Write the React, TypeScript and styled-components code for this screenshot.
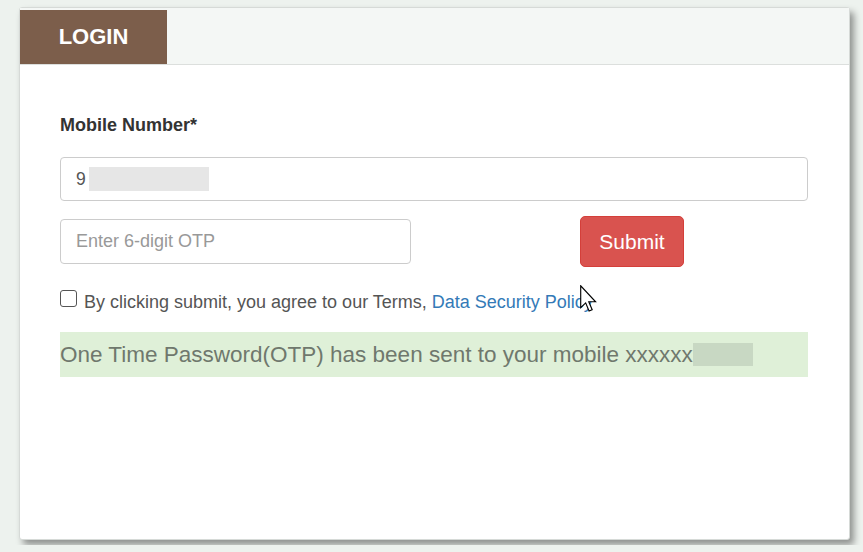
import styled, { createGlobalStyle } from 'styled-components';

const GlobalStyle = createGlobalStyle`
  html, body {
    margin: 0;
    padding: 0;
    background: #edf2ee;
  }

  body {
    font-family: 'Liberation Sans', Arial, sans-serif;
    color: #333;
  }
`;

export default function App() {
  return (
    <>
      <GlobalStyle />
      <Page>
        <Modal>
          <Header>
            <Tab>LOGIN</Tab>
          </Header>
          <Body>
            <Label>Mobile Number*</Label>
            <PhoneField>
              <span>9</span>
              <Redact $w={120} $h={24} $color="#e6e6e6" />
            </PhoneField>
            <OtpRow>
              <OtpInput placeholder="Enter 6-digit OTP" />
              <SubmitButton>Submit</SubmitButton>
            </OtpRow>
            <Terms>
              <Checkbox type="checkbox" />
              <span>
                By clicking submit, you agree to our Terms, <Link>Data Security Policy</Link>
              </span>
              <Cursor viewBox="0 0 12 19" width="17" height="27">
                <path
                  d="M0.5 0.5 L0.5 16 L4 12.6 L6.4 18.3 L8.6 17.4 L6.2 11.8 L11 11.8 Z"
                  fill="#fff"
                  stroke="#000"
                  strokeWidth="0.8"
                  strokeLinejoin="miter"
                />
              </Cursor>
            </Terms>
            <Alert>
              One Time Password(OTP) has been sent to your mobile xxxxxx
              <Redact $w={60} $h={23} $color="#c8d8c3" />
            </Alert>
          </Body>
        </Modal>
      </Page>
    </>
  );
}

const Page = styled.div`
  padding: 7px 0 0 19px;
  height: 545px;
  box-sizing: border-box;
`;

const Modal = styled.div`
  width: 831px;
  height: 533px;
  box-sizing: border-box;
  background: #fff;
  border: 1px solid #d6dad7;
  border-radius: 3px;
  box-shadow: 4px 5px 7px rgba(0, 0, 0, 0.4);
  display: flex;
  flex-direction: column;
`;

const Header = styled.div`
  height: 57px;
  box-sizing: border-box;
  padding-top: 2px;
  background: #f4f7f5;
  border-bottom: 1px solid #dcdfdd;
  display: flex;
`;

const Tab = styled.div`
  width: 147px;
  height: 54px;
  background: #7c5e4b;
  color: #fff;
  font-size: 22px;
  font-weight: 700;
  display: flex;
  align-items: center;
  justify-content: center;
`;

const Body = styled.div`
  padding: 48px 41px 0 40px;
  display: flex;
  flex-direction: column;
`;

const Label = styled.div`
  font-size: 18px;
  font-weight: 700;
  line-height: 25px;
  color: #333;
`;

const PhoneField = styled.div`
  margin-top: 19px;
  height: 44px;
  box-sizing: border-box;
  border: 1px solid #ccc;
  border-radius: 4px;
  padding: 0 15px;
  display: flex;
  align-items: center;
  gap: 3px;
  font-size: 17.5px;
  color: #555;
`;

const Redact = styled.span<{ $w: number; $h: number; $color: string }>`
  display: inline-block;
  width: ${(p) => p.$w}px;
  height: ${(p) => p.$h}px;
  background: ${(p) => p.$color};
  vertical-align: middle;
`;

const OtpRow = styled.div`
  margin-top: 15px;
  display: flex;
  align-items: center;
`;

const OtpInput = styled.input`
  width: 351px;
  height: 45px;
  box-sizing: border-box;
  border: 1px solid #ccc;
  border-radius: 4px;
  padding: 0 15px;
  font-family: 'Liberation Sans', Arial, sans-serif;
  font-size: 18px;
  color: #555;
  outline: none;

  &::placeholder {
    color: #999;
  }
`;

const SubmitButton = styled.button`
  margin-left: 169px;
  width: 104px;
  height: 51px;
  box-sizing: border-box;
  background: #d9534f;
  border: 1px solid #d43f3a;
  border-radius: 5px;
  color: #fff;
  font-family: 'Liberation Sans', Arial, sans-serif;
  font-size: 21px;
  padding: 0;
`;

const Terms = styled.div`
  position: relative;
  margin-top: 24px;
  display: flex;
  align-items: center;
  gap: 7px;
  font-size: 18px;
  line-height: 22px;
  color: #555;
`;

const Checkbox = styled.input`
  appearance: none;
  margin: 0;
  width: 17px;
  height: 17px;
  border: 1.5px solid #555;
  border-radius: 3px;
  background: #fff;
  flex-shrink: 0;
  position: relative;
  top: -4px;
`;

const Link = styled.span`
  color: #337ab7;
`;

const Cursor = styled.svg`
  position: absolute;
  left: 520px;
  top: -6px;
`;

const Alert = styled.div`
  margin-top: 19px;
  height: 45px;
  background: #dff0d8;
  display: flex;
  align-items: center;
  font-size: 22.5px;
  color: #6f786d;
  white-space: nowrap;
`;
